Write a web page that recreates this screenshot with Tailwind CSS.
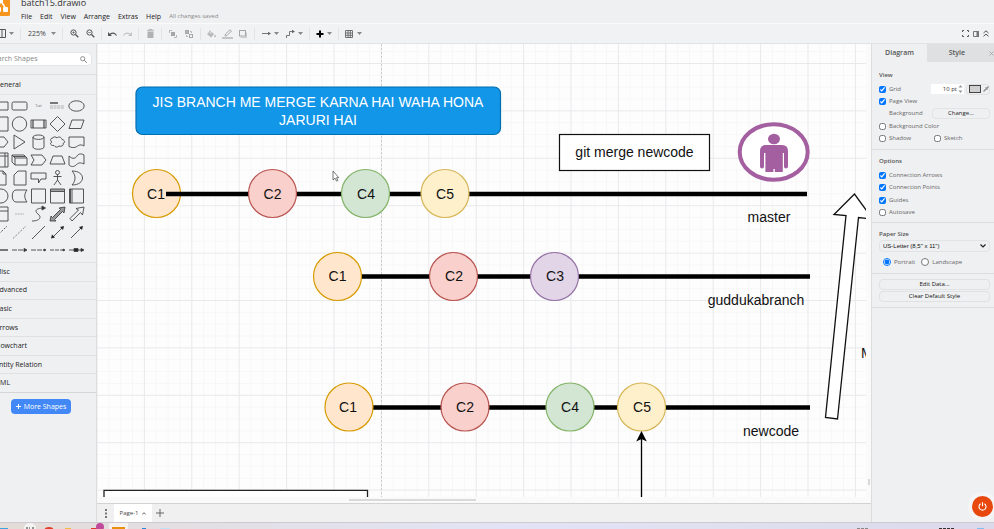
<!DOCTYPE html>
<html lang="en">
<head>
<meta charset="utf-8">
<title>batch15.drawio</title>
<script src="https://cdn.jsdelivr.net/npm/@tailwindcss/browser@4"></script>
</head>
<body class="h-screen flex flex-col overflow-hidden bg-[#eff0f2] font-['Open_Sans','Noto_Sans',sans-serif] text-[7px] leading-3 text-[#333]">

<svg class="hidden">
  <symbol id="caret" viewBox="0 0 5 3"><path d="M0 0h5L2.500 3z" fill="#888"/></symbol>
</svg>

<header class="h-6 shrink-0 flex gap-[11px] border-b border-[#fafafa]">
  <svg class="w-[10px] h-[17px] shrink-0" viewBox="0 0 10 17"><rect x="-10" y="-4" width="20" height="20" rx="1.500" fill="#f7941d"/><path d="M1 1L-3 9M1 1L6 9" stroke="#fff" stroke-width="1.500"/><rect x="-3" y="-2" width="6" height="5" fill="#fff"/><rect x="3" y="7" width="5" height="5" rx="1" fill="#fff"/><rect x="-3" y="7" width="4" height="5" rx="1" fill="#fff"/></svg>
  <div class="flex-1">
    <h1 class="-mt-1 h-[14px] text-[9px] leading-[13px] text-[#333]">batch15.drawio</h1>
    <nav class="flex gap-2 text-[7px] leading-[13px] text-[#222]">
      <a href="#">File</a><a href="#">Edit</a><a href="#">View</a><a href="#">Arrange</a><a href="#">Extras</a><a href="#">Help</a><span class="text-[6px] text-[#888]">All changes saved</span>
    </nav>
  </div>
</header>

<div class="h-5 shrink-0 flex items-center bg-[#f1f2f4] border-b border-[#e2e3e5]">
  <button class="w-[17px] h-4 flex items-center gap-[3px]" aria-label="Panels"><svg class="w-[6px] h-[9px]" viewBox="0 0 6 9"><path d="M0 .5h5.500v8H0M2 1v7" fill="none" stroke="#555"/></svg><svg class="w-[5px] h-[3px]"><use href="#caret"/></svg></button>
  <i class="w-px h-3 mx-[3px] bg-[#e2e3e5]"></i>
  <button class="w-[35px] h-4 pl-1 flex items-center gap-[5px] text-[7px] text-[#444]">225%<svg class="w-[5px] h-[3px]"><use href="#caret"/></svg></button>
  <i class="w-px h-3 mx-[3px] bg-[#e2e3e5]"></i>
  <button class="w-4 h-4 flex items-center justify-center" aria-label="Zoom in"><svg class="w-[9px] h-[9px]" viewBox="0 0 9 9" fill="none" stroke="#555"><circle cx="3.500" cy="3.500" r="2.600"/><path d="M5.500 5.500L8.300 8.300" stroke-width="1.300"/><path d="M2.300 3.500h2.400M3.500 2.300v2.400" stroke-width=".7"/></svg></button>
  <button class="w-4 h-4 flex items-center justify-center" aria-label="Zoom out"><svg class="w-[9px] h-[9px]" viewBox="0 0 9 9" fill="none" stroke="#555"><circle cx="3.500" cy="3.500" r="2.600"/><path d="M5.500 5.500L8.300 8.300" stroke-width="1.300"/><path d="M2.300 3.500h2.400" stroke-width=".7"/></svg></button>
  <i class="w-px h-3 mx-[3px] bg-[#e2e3e5]"></i>
  <button class="w-[15px] h-4 flex items-center justify-center" aria-label="Undo"><svg class="w-[9px] h-[6px]" viewBox="0 0 9 6"><path d="M0 1v4h4L2.600 3.700C4.500 2.200 6.800 2.600 8 4.800L9 4.500C7.600 1.300 4.300.7 1.800 2.800z" fill="#555"/></svg></button>
  <button class="w-[15px] h-4 flex items-center justify-center" aria-label="Redo"><svg class="w-[9px] h-[6px]" viewBox="0 0 9 6"><path d="M9 1v4H5L6.400 3.700C4.500 2.200 2.200 2.600 1 4.800L0 4.500C1.400 1.300 4.700.7 7.200 2.800z" fill="#c4c5c7"/></svg></button>
  <i class="w-px h-3 mx-[3px] bg-[#e2e3e5]"></i>
  <button class="w-4 h-4 flex items-center justify-center" aria-label="Delete"><svg class="w-[7px] h-[9px]" viewBox="0 0 7 9"><path d="M0 .8h2L2.500 0h2L5 .8h2v1H0zM.5 2.500h6V9h-6z" fill="#b0b1b3"/></svg></button>
  <i class="w-px h-3 mx-[3px] bg-[#e2e3e5]"></i>
  <button class="w-4 h-4 flex items-center justify-center" aria-label="To front"><svg class="w-[8px] h-[8px]" viewBox="0 0 8 8"><path d="M.5 3V.5H3M7.500 5v2.500H5" fill="none" stroke="#b5b6b8"/><rect x="2" y="2" width="4" height="4" fill="#a5a6a8"/></svg></button>
  <button class="w-4 h-4 flex items-center justify-center" aria-label="To back"><svg class="w-[8px] h-[8px]" viewBox="0 0 8 8"><rect x=".5" y=".5" width="3" height="3" fill="#b5b6b8" stroke="#a5a6a8"/><rect x="4.500" y="4.500" width="3" height="3" fill="none" stroke="#a5a6a8"/><path d="M5 1.500h1.500V3M1.500 5v1.500H3" fill="none" stroke="#b5b6b8"/></svg></button>
  <i class="w-px h-3 mx-[3px] bg-[#e2e3e5]"></i>
  <button class="w-[15px] h-4 flex items-center justify-center" aria-label="Fill color"><svg class="w-[9px] h-[8px]" viewBox="0 0 9 8"><path d="M2 0l5 4-3 3.500L0 4l2.500-2.500zM8 4.500q1.800 2.500 0 2.800-1.600-.3 0-2.800" fill="#b5b6b8"/><path d="M2.500 3h2" stroke="#f1f2f4"/></svg></button>
  <button class="w-4 h-4 flex items-center justify-center" aria-label="Line color"><svg class="w-[11px] h-[10px]" viewBox="0 0 11 10"><path d="M3 7l.5-2L8 .8 9.500 2 5 6.500z" fill="none" stroke="#a8a9ab"/><path d="M0 9h11" stroke="#b5b6b8" stroke-width="1.500"/></svg></button>
  <button class="w-4 h-4 flex items-center justify-center" aria-label="Shadow"><svg class="w-[8px] h-[8px]" viewBox="0 0 8 8"><path d="M1.500 7.500h6v-5" fill="none" stroke="#c9cacc"/><rect x=".5" y=".5" width="6" height="5.500" fill="none" stroke="#a5a6a8"/></svg></button>
  <i class="w-px h-3 mx-[3px] bg-[#e2e3e5]"></i>
  <button class="w-6 h-4 flex items-center justify-center gap-[3px]" aria-label="Connection"><svg class="w-[9px] h-[5px]" viewBox="0 0 9 5"><path d="M0 2.500h7" stroke="#777"/><path d="M6 .7l3 1.800-3 1.800z" fill="#666"/></svg><svg class="w-[5px] h-[3px]"><use href="#caret"/></svg></button>
  <button class="w-6 h-4 flex items-center justify-center gap-[3px]" aria-label="Waypoints"><svg class="w-[9px] h-[9px]" viewBox="0 0 9 9"><path d="M.5 9V6.500h3v-4h4" fill="none" stroke="#777"/><path d="M6 .7l3 1.800-3 1.800z" fill="#666"/></svg><svg class="w-[5px] h-[3px]"><use href="#caret"/></svg></button>
  <i class="w-px h-3 mx-[3px] bg-[#e2e3e5]"></i>
  <button class="w-[22px] h-4 flex items-center justify-center gap-[3px]" aria-label="Insert"><svg class="w-[8px] h-[8px]" viewBox="0 0 8 8"><path d="M4 .5v7M.5 4h7" stroke="#000" stroke-width="2"/></svg><svg class="w-[5px] h-[3px]"><use href="#caret"/></svg></button>
  <i class="w-px h-3 mx-[3px] bg-[#e2e3e5]"></i>
  <button class="w-[22px] h-4 flex items-center justify-center gap-[4px]" aria-label="Table"><svg class="w-[8px] h-[8px]" viewBox="0 0 8 8"><path d="M.5.5h7v7h-7zM.5 3h7M.5 5.300h7M3 0v8M5.300 0v8" fill="none" stroke="#666" stroke-width=".9"/></svg><svg class="w-[5px] h-[3px]"><use href="#caret"/></svg></button>
  <div class="ml-auto pr-[5px] flex items-center gap-1">
    <button aria-label="Fullscreen"><svg class="block w-[7px] h-[7px]" viewBox="0 0 7 7"><path d="M.5 2V.5H2M5 .5h1.500V2M6.500 5v1.500H5M2 6.500H.5V5" fill="none" stroke="#555"/></svg></button>
    <button aria-label="Format panel"><svg class="block w-[6px] h-[6px]" viewBox="0 0 6 6"><path d="M.5.5h5v5h-5z" fill="none" stroke="#777"/><path d="M3.500 0H6v6H3.500z" fill="#777"/></svg></button>
    <button aria-label="Collapse"><svg class="block w-[6px] h-[7px]" viewBox="0 0 6 7"><path d="M.5 3L3 .8 5.500 3M.5 6.300L3 4.100l2.500 2.200" fill="none" stroke="#555"/></svg></button>
  </div>
</div>

<main class="flex-1 min-h-0 flex">
  <aside class="-ml-[5px] w-[102px] shrink-0 border-r border-[#dcdddf] text-[#222]">
    <div class="h-[31px] pt-2 border-b border-[#dcdddf]">
      <label class="mr-1 h-[14px] flex items-center pr-1 bg-white border border-[#e4e5e7] rounded-sm">
        <input type="text" placeholder="Search Shapes" aria-label="Search Shapes" class="-ml-[6px] flex-1 min-w-0 text-[7px] leading-3 outline-none placeholder:text-[#888]">
        <svg class="w-[7px] h-[7px]" viewBox="0 0 7 7" fill="none" stroke="#777"><circle cx="2.700" cy="2.700" r="2.100" stroke-width=".8"/><path d="M4.300 4.300L6.700 6.700"/></svg>
      </label>
    </div>
    <h2 class="h-5 leading-5 border-b border-[#e4e5e7]">General</h2>
    <div id="shapes" class="-ml-1 pt-[2px] h-[167px] grid grid-cols-[repeat(5,19px)] auto-rows-[18px]"></div>
    <div class="h-[131px] flex flex-col border-b border-[#d4d5d7]">
      <a href="#" class="flex-1 flex items-center border-t border-[#e0e1e3]">Misc</a>
      <a href="#" class="flex-1 flex items-center border-t border-[#e0e1e3]">Advanced</a>
      <a href="#" class="flex-1 flex items-center border-t border-[#e0e1e3]">Basic</a>
      <a href="#" class="flex-1 flex items-center border-t border-[#e0e1e3]">Arrows</a>
      <a href="#" class="flex-1 flex items-center border-t border-[#e0e1e3]">Flowchart</a>
      <a href="#" class="flex-1 flex items-center border-t border-[#e0e1e3]">Entity Relation</a>
      <a href="#" class="flex-1 flex items-center border-t border-[#e0e1e3]">UML</a>
    </div>
    <button class="mt-[6px] ml-4 w-[60px] h-[15px] flex items-center justify-center gap-[3px] rounded-sm bg-[#4288f6] text-white text-[7px]"><svg class="w-[5px] h-[5px]" viewBox="0 0 5 5"><path d="M2.500 0v5M0 2.500h5" stroke="#fff"/></svg>More Shapes</button>
  </aside>

  <section class="flex-1 min-w-0 flex flex-col">
    <div class="flex-1 min-h-0 flex bg-[#fdfdfe]">
      <svg class="flex-1 min-w-0 h-full" font-family="'Liberation Sans', Arial, sans-serif" font-size="14" fill="#111" text-anchor="middle">
        <defs>
          <pattern id="grid" width="47.400" height="47.400" patternUnits="userSpaceOnUse" x="96.500" y="63">
            <path d="M12.300 0v47.400M24.200 0v47.400M36 0v47.400M0 12.300h47.400M0 24.200h47.400M0 36h47.400" stroke="#f7f7f8"/>
            <path d="M.5 0v47.400M0 .5h47.400" stroke="#e8e9eb"/>
          </pattern>
        </defs>
        <g transform="translate(-97,-44)">
          <rect x="97" y="44" width="2000" height="2000" fill="url(#grid)"/>
          <path d="M381.500 44V2000" stroke="#ccc" stroke-dasharray="2 2"/>
          <rect x="136" y="87" width="364.500" height="47.500" rx="6.500" fill="#1296e8" stroke="#006eaf" stroke-width="1.200"/>
          <g fill="#fff"><text x="318" y="107">JIS BRANCH ME MERGE KARNA HAI WAHA HONA</text><text x="318" y="125">JARURI HAI</text></g>
          <rect x="559.500" y="134.500" width="150" height="36" fill="#fff" stroke="#111" stroke-width="1.200"/>
          <text x="634.500" y="157">git merge newcode</text>

          <g stroke-width="1.200">
            <circle cx="156.500" cy="193.500" r="24" fill="#ffe6cc" stroke="#d79b00"/>
            <path d="M166 194H807" stroke="#000" stroke-width="4.600"/>
            <circle cx="272.500" cy="193.500" r="24" fill="#f9d0cb" stroke="#b85450"/>
            <circle cx="365.500" cy="193.500" r="24" fill="#d3e5d3" stroke="#82b366"/>
            <circle cx="445" cy="193.500" r="24" fill="#fff0cc" stroke="#d6b656"/>
            <path d="M338 276.500H810M349 407.500H810" stroke="#000" stroke-width="4.600"/>
            <circle cx="337.500" cy="276.500" r="24" fill="#ffe6cc" stroke="#d79b00"/>
            <circle cx="453.500" cy="276.500" r="24" fill="#f9d0cb" stroke="#b85450"/>
            <circle cx="554.500" cy="276.500" r="24" fill="#e1d5e7" stroke="#9673a6"/>
            <circle cx="349" cy="407" r="24" fill="#ffe6cc" stroke="#d79b00"/>
            <circle cx="465" cy="407" r="24" fill="#f9d0cb" stroke="#b85450"/>
            <circle cx="570" cy="407" r="24" fill="#d3e5d3" stroke="#82b366"/>
            <circle cx="641.500" cy="407" r="24" fill="#fff0cc" stroke="#d6b656"/>
          </g>
          <text x="156" y="199">C1</text><text x="272.500" y="199">C2</text><text x="366" y="199">C4</text><text x="445" y="199">C5</text>
          <text x="337.500" y="281">C1</text><text x="454" y="281">C2</text><text x="555" y="281">C3</text>
          <text x="348" y="412">C1</text><text x="465" y="412">C2</text><text x="570" y="412">C4</text><text x="642" y="412">C5</text>
          <text x="769" y="222">master</text><text x="756" y="305">guddukabranch</text><text x="771" y="436">newcode</text>
          <text x="861" y="358" text-anchor="start">M</text>

          <ellipse cx="773.700" cy="152" rx="34" ry="27.700" fill="#fff" stroke="#a35fa0" stroke-width="4"/>
          <g fill="#a35fa0"><ellipse cx="774" cy="139" rx="6" ry="5.200"/><path d="M766 145h16q6 0 6 6v15.500q0 2-2 2t-2-2V153h-1.200v19h-8v-3h-1.400v3h-8v-19H764v13.500q0 2-2 2t-2-2V151q0-6 6-6z"/></g>

          <path d="M854.500 194L834 214.500l12 1L825.500 417.500l12 1.500L858.500 217.500l14 1.500z" fill="#fff" stroke="#111" stroke-width="1.300"/>
          <path d="M641.500 438V2000" stroke="#000" stroke-width="1.300"/><path d="M641.500 431l5.300 10.500-5.300-2.500-5.300 2.500z" fill="#000"/>
          <path d="M104 1000V490.300H367.500V1000" fill="#fff" stroke="#222" stroke-width="1.300"/>
          <path d="M333 171v9l2-1.800 1.700 3 1.200-.7-1.500-2.800h2.400z" fill="#fff" stroke="#555" stroke-width=".8"/>
        </g>
      </svg>
      <div class="w-[5px] shrink-0 flex flex-col justify-end items-center pb-3 bg-[#fafafa]"><i class="w-[2px] h-[6px] bg-[#d8d8d8]"></i></div>
    </div>
    <div class="h-[6px] shrink-0 pt-[2px] bg-[#fafafa]"><i class="block ml-[252px] w-[127px] h-[2px] bg-[#dadada]"></i></div>
    <div class="h-[19px] shrink-0 flex items-center border-t border-[#d2d3d5] bg-[#f0f0f0]">
      <button class="w-[17px] h-full flex items-center justify-center" aria-label="Pages"><svg class="w-[2px] h-[9px]" viewBox="0 0 2 9"><path d="M0 0h2v2H0zM0 3.500h2v2H0zM0 7h2v2H0z" fill="#777"/></svg></button>
      <button class="w-[38px] h-full flex items-center justify-center gap-1 bg-white text-[6px] text-[#444]">Page-1<svg class="w-[4px] h-[3px]" viewBox="0 0 4 3"><path d="M.3 2.500L2 .7l1.700 1.800" fill="none" stroke="#555" stroke-width=".9"/></svg></button>
      <button class="w-4 h-full flex items-center justify-center" aria-label="Insert page"><svg class="w-[8px] h-[8px]" viewBox="0 0 8 8"><path d="M4 0v8M0 4h8" stroke="#666"/></svg></button>
    </div>
  </section>

  <aside class="relative w-[123px] shrink-0 border-l border-[#dcdddf] text-[6px] text-[#666]">
    <div class="h-[18px] flex font-semibold text-[#555]">
      <button class="w-[55px] shrink-0 text-[7px]">Diagram</button>
      <button class="flex-1 min-w-0 flex items-center justify-end gap-6 bg-[#dfe0e2] text-[7px]">Style<svg class="w-[5px] h-[5px]" viewBox="0 0 5 5"><path d="M.5.5l4 4M4.500.5l-4 4" stroke="#999" stroke-width=".7"/></svg></button>
    </div>
    <div class="h-[88px] pt-[7px] pl-[7px] pr-1 border-b border-[#dcdddf]">
      <h3 class="h-[14px] font-semibold text-[#555]">View</h3>
      <div class="h-3 flex items-center">
        <label class="flex items-center gap-[3px]"><input type="checkbox" checked class="w-[7px] h-[7px]">Grid</label>
        <input type="text" value="10 pt" aria-label="Grid size" class="ml-auto w-[26px] h-[10px] bg-white text-right text-[6px] text-[#333]">
        <svg class="w-[7px] h-[10px] bg-white" viewBox="0 0 7 10"><path d="M1.500 3.500L3.500 1l2 2.500zM1.500 6.500l2 2.500 2-2.500z" fill="#999"/></svg>
        <button class="ml-[2px] w-[24px] h-[11px] flex items-center gap-[2px] pl-[2px] border border-[#e0e0e0] rounded-sm" aria-label="Grid color"><i class="w-3 h-[8px] border border-[#444] bg-[#d0d0d0]"></i><svg class="w-[6px] h-[6px]" viewBox="0 0 6 6"><path d="M.5 5.500l3-3M2.500 1.500l2 2M4 2L5.500.5" stroke="#888" stroke-width="1.200"/></svg></button>
      </div>
      <label class="h-3 flex items-center gap-[3px]"><input type="checkbox" checked class="w-[7px] h-[7px]">Page View</label>
      <div class="h-3 pl-[10px] flex items-center justify-between">Background<button class="w-[58px] h-[11px] leading-[9px] border border-[#e2e3e5] rounded-sm text-[6px] text-[#222]">Change...</button></div>
      <label class="mt-px h-3 flex items-center gap-[3px]"><input type="checkbox" class="w-[7px] h-[7px]">Background Color</label>
      <div class="h-3 flex items-center"><label class="w-[55px] flex items-center gap-[3px]"><input type="checkbox" class="w-[7px] h-[7px]">Shadow</label><label class="flex items-center gap-[3px]"><input type="checkbox" class="w-[7px] h-[7px]">Sketch</label></div>
    </div>
    <div class="h-[73px] pt-[5px] pl-[7px] border-b border-[#dcdddf]">
      <h3 class="h-[14px] font-semibold text-[#555]">Options</h3>
      <label class="h-3 flex items-center gap-[3px]"><input type="checkbox" checked class="w-[7px] h-[7px]">Connection Arrows</label>
      <label class="h-3 flex items-center gap-[3px]"><input type="checkbox" checked class="w-[7px] h-[7px]">Connection Points</label>
      <label class="mt-px h-3 flex items-center gap-[3px]"><input type="checkbox" checked class="w-[7px] h-[7px]">Guides</label>
      <label class="h-3 flex items-center gap-[3px]"><input type="checkbox" class="w-[7px] h-[7px]">Autosave</label>
    </div>
    <div class="h-[51px] pt-[5px] pl-[7px] pr-1 border-b border-[#dcdddf]">
      <h3 class="h-3 font-semibold text-[#555]">Paper Size</h3>
      <div class="relative">
        <select aria-label="Paper Size" class="block w-full h-3 pl-[3px] appearance-none border border-[#e2e3e5] rounded-sm font-['Liberation_Sans',Arial,sans-serif] text-[6px] leading-[10px] text-[#111]"><option>US-Letter (8,5" x 11")</option></select>
        <svg class="absolute right-1 top-1 w-[6px] h-[4px]" viewBox="0 0 6 4"><path d="M.5.500L3 3 5.500.500" fill="none" stroke="#222" stroke-width="1.200"/></svg>
      </div>
      <div class="pl-1 pt-1 flex items-center gap-[6px]">
        <label class="flex items-center gap-[3px]"><input type="radio" name="o" checked class="w-[8px] h-[8px]">Portrait</label>
        <label class="flex items-center gap-[3px]"><input type="radio" name="o" class="w-[8px] h-[8px]">Landscape</label>
      </div>
    </div>
    <div class="pt-[5px] pb-[5px] pl-[7px] pr-1 flex flex-col gap-px border-b border-[#dcdddf] text-[#111]">
      <button class="h-[11px] leading-[9px] border border-[#e0e1e3] rounded-sm text-[6px]">Edit Data...</button>
      <button class="h-[11px] leading-[9px] border border-[#e0e1e3] rounded-sm text-[6px]">Clear Default Style</button>
    </div>
    <button class="absolute right-[1px] bottom-[5px] w-[21px] h-[21px] rounded-full bg-[#e8480e] ring-4 ring-[#f5f5f6] flex items-center justify-center" aria-label="Power"><svg class="w-[9px] h-[9px]" viewBox="0 0 9 9"><path d="M2.500 1.800a3.500 3.500 0 1 0 4 0M4.500 .3v4" fill="none" stroke="#fff" stroke-width="1.100"/></svg></button>
  </aside>
</main>

<footer class="h-[7px] shrink-0 border-t border-[#cfcad2] bg-linear-to-r from-[#e3dcd8] via-[#e2e4f5] to-[#dcdaea]">
  <svg class="w-full h-[6px]" viewBox="0 0 994 6" preserveAspectRatio="xMinYMin slice">
    <path d="M0 5h8v1H0z" fill="#3aa5e0"/><ellipse cx="30" cy="5" rx="6" ry="5" fill="#f3f3f3"/><path d="M26 5h2M29 5h1M32 5h2" stroke="#333"/>
    <ellipse cx="49" cy="7" rx="4.500" ry="3" fill="#e0402a"/><path d="M65 5h6v1h-6z" fill="#eebb44"/><path d="M91 5h7v1h-7z" fill="#d8392b"/><circle cx="100" cy="4" r="4" fill="#c0499a"/>
    <path d="M109 0h19v6h-19z" fill="#f5f1ee"/><path d="M112 4h13v2h-13z" fill="#e8910c"/><path d="M142 5h4v1h-4z" fill="#2389d8"/><path d="M160 5h10v1h-10z" fill="#bfe2f5"/>
    <path d="M857 5.500h12" stroke="#888" stroke-dasharray="3 1"/><path d="M939 5.500h15" stroke="#333" stroke-dasharray="3 1"/><path d="M977 5h7v1h-7z" fill="#7fc0ee"/>
  </svg>
</footer>

<script>
  // Sidebar palette: each entry is drawn in a 19x18 cell centred on (9.5, 9).
  const S = [
    ['Rectangle', '<path d="M2 5h15v8H2z"/>'],
    ['Rounded rectangle', '<rect x="2" y="5" width="15" height="8" rx="1.500"/>'],
    ['Text', '<text x="9.500" y="10" font-size="3" fill="#555" stroke="none" text-anchor="middle">Text</text>'],
    ['Heading', '<path d="M2 6h8" stroke-width="1.400"/><path d="M2 9h14M2 11h14" stroke="#aaa" stroke-dasharray="3 .6"/>'],
    ['Ellipse', '<ellipse cx="9.500" cy="9" rx="7.700" ry="5.200"/>'],
    ['Square', '<path d="M2 2h15v14H2z"/>'],
    ['Circle', '<circle cx="9.500" cy="9" r="7.200"/>'],
    ['Process', '<path d="M2 5h15v8H2z"/><path d="M4 5v8M15 5v8" stroke-width="1.200"/>'],
    ['Diamond', '<path d="M9.500 1.500L17 9l-7.500 7.500L2 9z"/>'],
    ['Parallelogram', '<path d="M5 5h12l-3 8.500H2z"/>'],
    ['Hexagon', '<path d="M2 4h11l4 5-4 5H2z"/>'],
    ['Triangle', '<path d="M4 2l11 7-11 7z"/>'],
    ['Cylinder', '<path d="M4 4v10c0 3 11 3 11 0V4"/><ellipse cx="9.500" cy="4.200" rx="5.500" ry="2.200"/>'],
    ['Cloud', '<path d="M5 5C2 5 2 8 4 9c-3 1-1 4 2 3.500 1 2 4 2 5 .5 3 1 5-1 4-2.500 3-1 1-4-1-4C13 3.500 10 3.500 9 5 8 3.500 5 3.500 5 5z"/>'],
    ['Document', '<path d="M2 4h15v9c-4-2.500-6 0-8 1s-5 .5-7-.5z"/>'],
    ['Internal storage', '<path d="M2 2h15v14H2zM2 5h15M14 2v14"/>'],
    ['Cube', '<path d="M2 4h12l3 3v7H5l-3-3zM2 4l3 3h12M5 7v7M3 5.500h12" />'],
    ['Step', '<path d="M2 4h11l4 5-4 5H2l3-5z"/>'],
    ['Trapezoid', '<path d="M5 5h9l3 8H2z"/>'],
    ['Tape', '<path d="M2 5c4 4 7 2 8 0s4-3 7-1v9c-4-2-6-1-8 1s-5 2-7 0z"/>'],
    ['Note', '<path d="M4 2h8l3 3v11H4zM12 2v3h3"/>'],
    ['Card', '<path d="M8 2h8v14H4V6z"/>'],
    ['Callout', '<path d="M2 4h15v6h-5l-2.500 4V10H2z"/>'],
    ['Actor', '<circle cx="9.500" cy="3.500" r="2"/><path d="M9.500 5.500V11M5.500 7.500h8M9.500 11l-3.500 5M9.500 11l3.500 5"/>'],
    ['Or', '<path d="M5 2c14 0 14 14 0 14 4-4 4-10 0-14z"/>'],
    ['And', '<path d="M4 2h6a7 7 0 0 1 0 14H4z"/>'],
    ['Data storage', '<path d="M6 3h11c-3 4-3 8 0 12H6C1 15 1 3 6 3z"/>'],
    ['Container', '<path d="M2.500 2h14v14h-14z"/>'],
    ['Title container', '<path d="M2.500 2h14v14h-14zM2.500 4.500h14M2.500 3h14"/>'],
    ['Horizontal container', '<path d="M2.500 2h14v14h-14zM5 2v14M3.500 2v14"/>'],
    ['List', '<path d="M2 2h15v14H2zM2 6h15"/>'],
    ['List item', '<path d="M5 9h9" stroke="#aaa" stroke-dasharray="2 .6"/>'],
    ['Curve', '<path d="M3 16c8 0 10-4 6-7s-2-6 6-6"/><path d="M13 1l3.500 2-3.500 2z" fill="#333"/>'],
    ['Bidirectional arrow', '<path d="M2 16l1-5 1.500 1.500 8-8L11 3l6-1-1 6-1.500-1.500-8 8L8 16z" fill="#999"/>'],
    ['Arrow', '<path d="M3 13.500l8.500-8.500L9 3.500 17 2l-1.500 8-2-2.500L5 16z"/>'],
    ['Dashed line', '<path d="M3 16L16 3" stroke-dasharray="2 1.500"/>'],
    ['Dotted line', '<path d="M3 15.500L16 3" stroke-dasharray="1 1.300"/>'],
    ['Line', '<path d="M3 16L16 3"/>'],
    ['Bidirectional connector', '<path d="M5 14L14 5"/><path d="M3 15.500l1-4 3 3zM16 3l-4 1 3 3z" fill="#222" stroke="none"/>'],
    ['Directional connector', '<path d="M4 15L14 5"/><path d="M16 3l-4 1 3 3z" fill="#222" stroke="none"/>'],
    ['Link', '<path d="M2 9h15" stroke-width="1.400"/>'],
    ['Connector 1', '<path d="M2 9h13" stroke-dasharray="5 1"/><path d="M14 7.500l3 1.500-3 1.500z" fill="#222"/>'],
    ['Connector 2', '<path d="M2 9h13" stroke-dasharray="5 1"/><path d="M15 8l2 1-2 1z" fill="#222"/>'],
    ['Connector 3', '<path d="M2 9h13" stroke-dasharray="4 1"/><path d="M15 8l2 1-2 1z" fill="#222"/>'],
    ['Connector 4', '<path d="M2 9h14"/><path d="M7 7.500h4v3H7zM14 7.500l3 1.500-3 1.500z" fill="#222"/>']
  ];
  document.getElementById('shapes').innerHTML = S.map(([n, d]) =>
    `<button aria-label="${n}"><svg class="block w-[19px] h-[18px]" viewBox="0 0 19 18" fill="none" stroke="#444" stroke-width=".9">${d}</svg></button>`).join('');
</script>
</body>
</html>
